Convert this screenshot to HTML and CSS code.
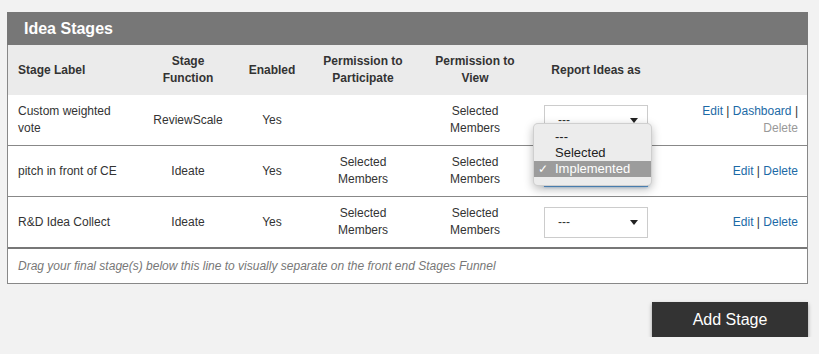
FILE: index.html
```html
<!DOCTYPE html>
<html lang="en">
<head>
    <meta charset="UTF-8">
    <meta name="viewport" content="width=device-width, initial-scale=1.0">
    <title>Idea Stages</title>
    <link rel="stylesheet" href="styles.css">
</head>
<body>
    <div class="page">
        <section class="panel">
            <h2 class="panel-title">Idea Stages</h2>
            <table class="stages">
                <colgroup>
                    <col class="c-label">
                    <col class="c-func">
                    <col class="c-enabled">
                    <col class="c-part">
                    <col class="c-view">
                    <col class="c-report">
                    <col class="c-actions">
                </colgroup>
                <thead>
                    <tr>
                        <th class="left">Stage Label</th>
                        <th>Stage<br>Function</th>
                        <th>Enabled</th>
                        <th>Permission to<br>Participate</th>
                        <th>Permission to<br>View</th>
                        <th>Report Ideas as</th>
                        <th></th>
                    </tr>
                </thead>
                <tbody>
                    <tr>
                        <td class="left">Custom weighted<br>vote</td>
                        <td>ReviewScale</td>
                        <td>Yes</td>
                        <td></td>
                        <td>Selected<br>Members</td>
                        <td>
                            <div class="select"><span>---</span><span class="caret"></span></div>
                        </td>
                        <td class="actions">
                            <a href="#">Edit</a> | <a href="#">Dashboard</a> |<br>
                            <span class="disabled">Delete</span>
                        </td>
                    </tr>
                    <tr>
                        <td class="left">pitch in front of CE</td>
                        <td>Ideate</td>
                        <td>Yes</td>
                        <td>Selected<br>Members</td>
                        <td>Selected<br>Members</td>
                        <td>
                            <div class="select-wrap">
                                <!-- value is hidden under the open menu -->
                                <div class="select focused"><span></span><span class="caret"></span></div>
                                <ul class="menu">
                                    <li>---</li>
                                    <li>Selected</li>
                                    <li class="checked"><span class="check">&#10003;</span>Implemented</li>
                                </ul>
                            </div>
                        </td>
                        <td class="actions"><a href="#">Edit</a> | <a href="#">Delete</a></td>
                    </tr>
                    <tr class="last">
                        <td class="left">R&amp;D Idea Collect</td>
                        <td>Ideate</td>
                        <td>Yes</td>
                        <td>Selected<br>Members</td>
                        <td>Selected<br>Members</td>
                        <td>
                            <div class="select"><span>---</span><span class="caret"></span></div>
                        </td>
                        <td class="actions"><a href="#">Edit</a> | <a href="#">Delete</a></td>
                    </tr>
                    <tr class="hint">
                        <td colspan="7">Drag your final stage(s) below this line to visually separate on the front end Stages Funnel</td>
                    </tr>
                </tbody>
            </table>
        </section>

        <button class="add-btn">Add Stage</button>
    </div>
</body>
</html>
```

FILE: styles.css
```css
body {
    margin: 0;
    padding: 0;
    background: #f2f2f2;
    color: #333;
    font-family: 'Liberation Sans', Arial, Helvetica, sans-serif;
    font-size: 12px;
}

.page {
    width: 801px;
    margin-left: 7px;
    padding-top: 12px;
    display: flex;
    flex-direction: column;
}

.panel {
    background: #fff;
    border: 1px solid #888;
    border-top: none;
}

.panel-title {
    margin: 0 -1px;
    height: 33px;
    line-height: 33px;
    padding-left: 17px;
    background: #777;
    color: #fff;
    font-size: 16px;
    font-weight: bold;
}

.stages {
    width: 100%;
    border-collapse: collapse;
    table-layout: fixed;
}

.c-label { width: 137px; }
.c-func { width: 86px; }
.c-enabled { width: 82px; }
.c-part { width: 100px; }
.c-view { width: 124px; }
.c-report { width: 118px; }

.stages th,
.stages td {
    padding: 0 4px;
    text-align: center;
    vertical-align: middle;
    line-height: 17px;
}

.stages th {
    background: #ebebeb;
    height: 50px;
    font-weight: bold;
}

.stages .left {
    text-align: left;
    padding-left: 10px;
}

.stages tbody tr {
    border-bottom: 1px solid #888;
}

.stages tbody td {
    height: 50px;
}

.stages tbody tr.last {
    border-bottom: 2px solid #777;
}

.stages tbody tr.hint {
    border-bottom: none;
}

.stages tr.hint td {
    height: 34px;
    text-align: left;
    padding-left: 10px;
    font-style: italic;
    color: #777;
}

.actions {
    text-align: right !important;
    padding-right: 9px !important;
}

.actions a {
    color: #1c6aa6;
    text-decoration: none;
}

.actions .disabled {
    color: #999;
}

.select {
    box-sizing: border-box;
    width: 104px;
    height: 31px;
    margin: 0 auto;
    border: 1px solid #ccc;
    background: #fff;
    display: flex;
    align-items: center;
    justify-content: space-between;
    padding: 0 9px 0 13px;
    text-align: left;
}

.select.focused {
    border-color: #5a9ad6;
    box-shadow: 0 0 3px rgba(90, 154, 214, 0.6);
}

.caret {
    width: 0;
    height: 0;
    border-left: 4px solid transparent;
    border-right: 4px solid transparent;
    border-top: 5px solid #222;
}

.select-wrap {
    position: relative;
    width: 104px;
    margin: 0 auto;
}

.menu {
    position: absolute;
    top: -33px;
    left: -11px;
    width: 117px;
    margin: 0;
    padding: 5px 0 8px;
    list-style: none;
    background: #ececec;
    border: 1px solid rgba(0, 0, 0, 0.12);
    border-radius: 5px;
    box-shadow: 0 3px 10px rgba(0, 0, 0, 0.28);
    text-align: left;
    font-size: 13px;
    color: #222;
    z-index: 10;
}

.menu li {
    position: relative;
    height: 16px;
    line-height: 16px;
    padding-left: 21px;
}

.menu li.checked {
    background: #9c9c9c;
    color: #fff;
}

.check {
    position: absolute;
    left: 4px;
    top: 0;
    font-size: 12px;
}

.add-btn {
    align-self: flex-end;
    margin-top: 18px;
    width: 156px;
    height: 35px;
    border: none;
    background: #333;
    color: #fff;
    font-family: 'Liberation Sans', Arial, sans-serif;
    font-size: 16px;
    box-shadow: 0 2px 4px rgba(0, 0, 0, 0.35);
    cursor: pointer;
}
```
